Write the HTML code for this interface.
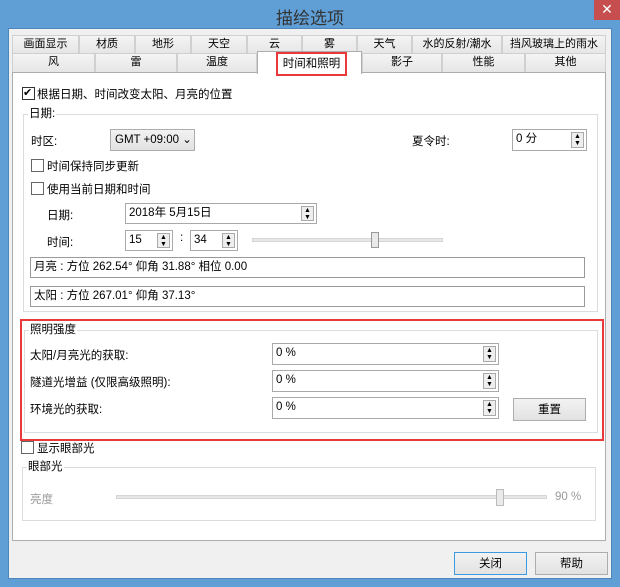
<!DOCTYPE html><html><head><meta charset="utf-8"><style>
*{box-sizing:border-box}
body{margin:0;width:620px;height:587px;overflow:hidden;background:#5f9fd6;font:11.5px "Liberation Sans","Noto Sans CJK SC",sans-serif;color:#000;position:relative}
.a{position:absolute}
.win{left:8px;top:28px;width:604px;height:551px;background:#f0f0f0;border:1px solid #4d86bd}
.tab{position:absolute;height:18px;border:1px solid #d0d0d0;border-bottom:none;background:linear-gradient(#f4f4f4,#e6e6e6);text-align:center;line-height:17px;font-size:11px}
.panel{left:12px;top:72px;width:594px;height:469px;background:#fff;border:1px solid #adadad}
.grp{position:absolute;border:1px solid #dcdcdc}
.lg{position:absolute;background:#fff;padding:0 1px;top:-8px;left:4px;line-height:14px}
.box{position:absolute;border:1px solid #aaa;background:#fff;line-height:18px;padding-left:3px}
.cb{position:absolute;width:13px;height:13px;border:1px solid #333;background:#fff;font-size:11px;line-height:11px}
.sp{position:absolute;right:2px;top:2px;width:13px;bottom:2px;border:1px solid #aaa;background:#eee;font-size:7px;line-height:7px;text-align:center}
.btn{position:absolute;border:1px solid #adadad;background:linear-gradient(#f2f2f2,#e2e2e2);text-align:center;line-height:22px}
</style></head><body>
<div class="a" style="left:0;top:4px;width:620px;text-align:center;font-size:17px;color:#333">描绘选项</div>
<div class="a" style="left:594px;top:0;width:26px;height:20px;background:#c74e4e;color:#fff;text-align:center;line-height:19px;font-size:14px">✕</div>
<div class="a win"></div>
<div class="tab" style="left:12px;top:35px;width:67px">画面显示</div>
<div class="tab" style="left:79px;top:35px;width:56px">材质</div>
<div class="tab" style="left:135px;top:35px;width:56px">地形</div>
<div class="tab" style="left:191px;top:35px;width:56px">天空</div>
<div class="tab" style="left:247px;top:35px;width:55px">云</div>
<div class="tab" style="left:302px;top:35px;width:55px">雾</div>
<div class="tab" style="left:357px;top:35px;width:55px">天气</div>
<div class="tab" style="left:412px;top:35px;width:90px">水的反射/潮水</div>
<div class="tab" style="left:502px;top:35px;width:104px">挡风玻璃上的雨水</div>
<div class="tab" style="left:12px;top:53px;width:83px;height:19px">风</div>
<div class="tab" style="left:95px;top:53px;width:82px;height:19px">雷</div>
<div class="tab" style="left:177px;top:53px;width:80px;height:19px">温度</div>
<div class="tab" style="left:362px;top:53px;width:80px;height:19px">影子</div>
<div class="tab" style="left:442px;top:53px;width:83px;height:19px">性能</div>
<div class="tab" style="left:525px;top:53px;width:81px;height:19px">其他</div>
<div class="a panel"></div>
<div class="a" style="left:257px;top:51px;width:105px;height:23px;background:#fff;border:1px solid #adadad;border-bottom:none"></div>
<div class="a" style="left:276px;top:52px;width:71px;height:24px;border:2px solid #e83a3a;text-align:center;line-height:20px">时间和照明</div>
<div class="cb" style="left:22px;top:87px">✔</div>
<div class="a" style="left:37px;top:86px">根据日期、时间改变太阳、月亮的位置</div>
<div class="grp" style="left:23px;top:114px;width:575px;height:198px"><span class="lg">日期:</span></div>
<div class="a" style="left:31px;top:133px">时区:</div>
<div class="btn" style="left:110px;top:129px;width:85px;height:22px;text-align:left;padding-left:4px;line-height:20px">GMT +09:00 ⌄</div>
<div class="a" style="left:412px;top:133px">夏令时:</div>
<div class="box" style="left:512px;top:129px;width:75px;height:22px">0 分<div class="sp">▲<br>▼</div></div>
<div class="cb" style="left:31px;top:159px;border-color:#666"></div><div class="a" style="left:47px;top:158px">时间保持同步更新</div>
<div class="cb" style="left:31px;top:182px;border-color:#666"></div><div class="a" style="left:47px;top:181px">使用当前日期和时间</div>
<div class="a" style="left:47px;top:207px">日期:</div>
<div class="box" style="left:125px;top:203px;width:192px;height:21px">2018年 5月15日<div class="sp">▲<br>▼</div></div>
<div class="a" style="left:47px;top:234px">时间:</div>
<div class="box" style="left:125px;top:230px;width:48px;height:21px">15<div class="sp">▲<br>▼</div></div>
<div class="a" style="left:180px;top:232px">:</div>
<div class="box" style="left:190px;top:230px;width:48px;height:21px">34<div class="sp">▲<br>▼</div></div>
<div class="a" style="left:252px;top:238px;width:191px;height:4px;background:#e7e7e7;border:1px solid #d6d6d6"></div>
<div class="a" style="left:371px;top:232px;width:8px;height:16px;background:#eaeaea;border:1px solid #999"></div>
<div class="box" style="left:30px;top:257px;width:555px;height:21px;border-color:#999">月亮 : 方位 262.54°  仰角 31.88°  相位 0.00</div>
<div class="box" style="left:30px;top:286px;width:555px;height:21px;border-color:#999">太阳 : 方位 267.01°  仰角 37.13°</div>
<div class="grp" style="left:24px;top:330px;width:574px;height:103px"><span class="lg">照明强度</span></div>
<div class="a" style="left:20px;top:319px;width:584px;height:122px;border:2px solid #e83a3a"></div>
<div class="a" style="left:30px;top:347px">太阳/月亮光的获取:</div>
<div class="a" style="left:30px;top:374px">隧道光增益 (仅限高级照明):</div>
<div class="a" style="left:30px;top:401px">环境光的获取:</div>
<div class="box" style="left:272px;top:343px;width:227px;height:22px">0 %<div class="sp">▲<br>▼</div></div>
<div class="box" style="left:272px;top:370px;width:227px;height:22px">0 %<div class="sp">▲<br>▼</div></div>
<div class="box" style="left:272px;top:397px;width:227px;height:22px">0 %<div class="sp">▲<br>▼</div></div>
<div class="btn" style="left:513px;top:398px;width:73px;height:23px">重置</div>
<div class="cb" style="left:21px;top:441px;border-color:#666"></div><div class="a" style="left:37px;top:440px">显示眼部光</div>
<div class="grp" style="left:22px;top:467px;width:574px;height:54px"><span class="lg">眼部光</span></div>
<div class="a" style="left:30px;top:491px;color:#999">亮度</div>
<div class="a" style="left:116px;top:495px;width:431px;height:4px;background:#e7e7e7;border:1px solid #d6d6d6"></div>
<div class="a" style="left:496px;top:489px;width:8px;height:17px;background:#eaeaea;border:1px solid #bbb"></div>
<div class="a" style="left:555px;top:491px;color:#999">90 %</div>
<div class="btn" style="left:454px;top:552px;width:73px;height:23px;border-color:#3c9be0">关闭</div>
<div class="btn" style="left:535px;top:552px;width:73px;height:23px">帮助</div>
</body></html>
